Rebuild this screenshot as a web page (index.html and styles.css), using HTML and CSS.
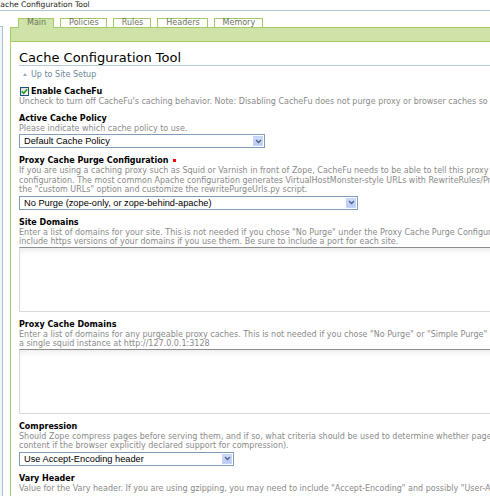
FILE: index.html
```html
<!DOCTYPE html>
<html>
<head>
<meta charset="utf-8">
<link rel="stylesheet" href="styles.css">
</head>
<body>
<div class="wintitle">Cache Configuration Tool</div>
<div class="page">
  <div class="sidebar"></div>
  <div class="main">
    <ul class="tabs">
      <li class="tab active">Main</li>
      <li class="tab">Policies</li>
      <li class="tab">Rules</li>
      <li class="tab">Headers</li>
      <li class="tab">Memory</li>
    </ul>
    <div class="tabbar"></div>
    <div class="content">
      <h1 class="title">Cache Configuration Tool</h1>
      <div class="up"><span class="uparrow"></span>Up to Site Setup</div>

      <div class="field first">
        <div class="checkrow">
          <span class="checkbox"><svg width="7" height="7" viewBox="0 0 7 7"><path d="M0.8 3.4 L2.7 5.3 L6.2 1.2" fill="none" stroke="#21a121" stroke-width="1.6"/></svg></span>
          <span class="label">Enable CacheFu</span>
        </div>
        <div class="desc">Uncheck to turn off CacheFu's caching behavior. Note: Disabling CacheFu does not purge proxy or browser caches so stale content may continue to be served.</div>
      </div>

      <div class="field second">
        <div class="label">Active Cache Policy</div>
        <div class="desc">Please indicate which cache policy to use.</div>
        <div class="select w1"><span class="seltext">Default Cache Policy</span><span class="selbtn"><svg width="7" height="5" viewBox="0 0 7 5"><path d="M1 1 L3.5 3.5 L6 1" fill="none" stroke="#4d6185" stroke-width="1.3"/></svg></span></div>
      </div>

      <div class="field">
        <div class="label">Proxy Cache Purge Configuration<span class="required"></span></div>
        <div class="desc">If you are using a caching proxy such as Squid or Varnish in front of Zope, CacheFu needs to be able to tell this proxy to purge its cache of certain pages. Choose the option that matches your<br>configuration. The most common Apache configuration generates VirtualHostMonster-style URLs with RewriteRules/ProxyPass. If you have a more complex setup, choose<br>the "custom URLs" option and customize the rewritePurgeUrls.py script.</div>
        <div class="select w2"><span class="seltext">No Purge (zope-only, or zope-behind-apache)</span><span class="selbtn"><svg width="7" height="5" viewBox="0 0 7 5"><path d="M1 1 L3.5 3.5 L6 1" fill="none" stroke="#4d6185" stroke-width="1.3"/></svg></span></div>
      </div>

      <div class="field">
        <div class="label">Site Domains</div>
        <div class="desc">Enter a list of domains for your site. This is not needed if you chose "No Purge" under the Proxy Cache Purge Configuration. Be sure to<br>include https versions of your domains if you use them. Be sure to include a port for each site.</div>
        <textarea class="area"></textarea>
      </div>

      <div class="field">
        <div class="label">Proxy Cache Domains</div>
        <div class="desc">Enter a list of domains for any purgeable proxy caches. This is not needed if you chose "No Purge" or "Simple Purge" under the Proxy Cache Purge Configuration. Example:<br>a single squid instance at http://127.0.0.1:3128</div>
        <textarea class="area"></textarea>
      </div>

      <div class="field">
        <div class="label">Compression</div>
        <div class="desc">Should Zope compress pages before serving them, and if so, what criteria should be used to determine whether pages should be gzipped (only gzip<br>content if the browser explicitly declared support for compression).</div>
        <div class="select w3"><span class="seltext">Use Accept-Encoding header</span><span class="selbtn"><svg width="7" height="5" viewBox="0 0 7 5"><path d="M1 1 L3.5 3.5 L6 1" fill="none" stroke="#4d6185" stroke-width="1.3"/></svg></span></div>
      </div>

      <div class="field">
        <div class="label">Vary Header</div>
        <div class="desc">Value for the Vary header. If you are using gzipping, you may need to include "Accept-Encoding" and possibly "User-Agent".</div>
      </div>
    </div>
  </div>
</div>
</body>
</html>
```

FILE: styles.css
```css
html, body {
  margin: 0;
  padding: 0;
  background: #fff;
  overflow: hidden;
}
body {
  font-family: "DejaVu Sans", Verdana, sans-serif;
  width: 490px;
  height: 496px;
}
.wintitle {
  height: 10px;
  line-height: 10px;
  font-size: 7.6px;
  color: #222;
  text-indent: -5px;
  white-space: nowrap;
  border-bottom: 1px solid #b2c9d3;
  overflow: hidden;
}
.page {
  display: flex;
  align-items: flex-start;
}
.sidebar {
  width: 2px;
  height: 470px;
  margin-top: 15px;
  border-top: 1px solid #a9c4d0;
  border-right: 1px solid #a9c4d0;
  background: #f3f6f8;
  flex: none;
}
.main {
  margin-left: 7px;
  width: 760px;
  flex: none;
}
.tabs {
  list-style: none;
  margin: 7px 0 0 0;
  padding: 0 0 0 8px;
  display: flex;
  align-items: flex-start;
  gap: 6px;
  height: 9px;
}
.tab {
  border: 1px solid #a3ca64;
  border-bottom: 0;
  height: 8px;
  line-height: 8px;
  padding: 0 7px 0 8px;
  font-size: 8px;
  color: #6c7461;
  background: #fff;
  white-space: nowrap;
}
.tab.active {
  height: 9px;
  background: #cfe3a8;
  position: relative;
  z-index: 1;
}
.tabbar {
  height: 13px;
  background: #cfe3a8;
  border-top: 1px solid #a3ca64;
  border-bottom: 1px solid #a3ca64;
  border-left: 1px solid #a3ca64;
}
.content {
  border-left: 1px solid #a5cf5e;
  padding: 8px 0 30px 8px;
}
.title {
  margin: 0;
  font-size: 13px;
  font-weight: normal;
  line-height: 15px;
  color: #000;
  border-bottom: 1px solid #b5cdd8;
  white-space: nowrap;
}
.up {
  margin-top: 4px;
  font-size: 8px;
  line-height: 10px;
  color: #6b8797;
  display: flex;
  align-items: center;
  padding-left: 4px;
}
.uparrow {
  width: 0;
  height: 0;
  border-left: 2px solid transparent;
  border-right: 2px solid transparent;
  border-bottom: 3px solid #9aabb4;
  margin-right: 4px;
  margin-top: -1px;
}
.field {
  margin-top: 8px;
}
.field.first {
  margin-top: 7px;
}
.field.second {
  margin-top: 7px;
}
.checkrow {
  display: flex;
  align-items: flex-start;
  height: 10px;
}
.checkbox {
  width: 7px;
  height: 7px;
  border: 1px solid #1c5180;
  background: linear-gradient(135deg, #dcdcd6, #fbfbf8);
  margin: 0 2px 0 1px;
  display: flex;
  align-items: center;
  justify-content: center;
  flex: none;
}
.label {
  font-size: 8px;
  font-weight: bold;
  line-height: 10px;
  color: #000;
  white-space: nowrap;
}
.required {
  display: inline-block;
  width: 3px;
  height: 3px;
  background: #f00;
  margin-left: 5px;
  vertical-align: 1px;
}
.desc {
  font-size: 8px;
  line-height: 9.5px;
  color: #8a8a8a;
  white-space: nowrap;
}
.select {
  margin-top: 1px;
  height: 12px;
  border: 1px solid #7f9db9;
  display: flex;
  align-items: center;
  justify-content: space-between;
  font-family: "Liberation Sans", Arial, sans-serif;
  font-size: 9.25px;
  color: #000;
  background: #fff;
}
.w1 { width: 244px; }
.w2 { width: 337px; }
.w3 { width: 213px; }
.seltext {
  padding-left: 4px;
  white-space: nowrap;
}
.selbtn {
  width: 10px;
  height: 10px;
  margin-right: 1px;
  background: linear-gradient(#cfdcfc, #b7c9f7);
  border: 1px solid #c6d4f4;
  box-sizing: border-box;
  display: flex;
  align-items: center;
  justify-content: center;
}
.area {
  display: block;
  margin: 0 0 1px 0;
  padding: 0;
  width: 700px;
  height: 65px;
  box-sizing: border-box;
  border: 1px solid #d9d9d9;
  border-top-color: #8c8c8c;
  box-shadow: inset 0 5px 6px -3px rgba(0, 0, 0, 0.09);
  resize: none;
  background: #fff;
}
```
